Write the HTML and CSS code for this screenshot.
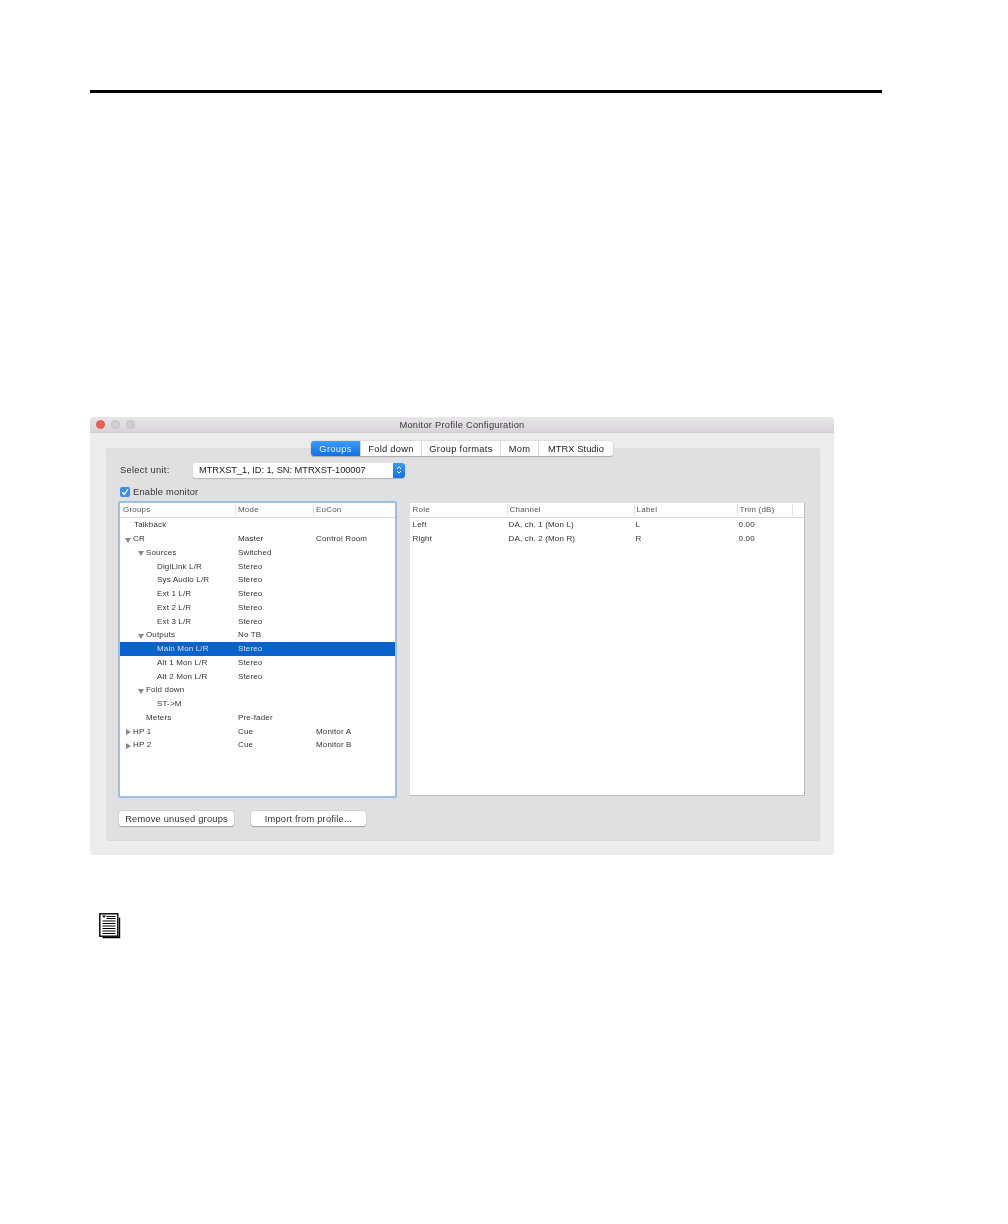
FILE: index.html
```html
<!DOCTYPE html>
<html lang="en">
<head>
<meta charset="utf-8">
<title>Monitor Profile Configuration</title>
<link rel="stylesheet" href="styles.css">
</head>
<body>
<div class="rule"></div>
<section class="window">
  <header class="titlebar">
    <div class="lights"><span class="light red"></span><span class="light"></span><span class="light"></span></div>
    <div class="title">Monitor Profile Configuration</div>
  </header>
  <div class="panel">
    <nav class="tabs">
      <span class="tab active t1">Groups</span><span class="tab t2">Fold down</span><span class="tab t3">Group formats</span><span class="tab t4">Mom</span><span class="tab t5">MTRX Studio</span>
    </nav>
    <div class="unit-row">
      <span class="unit-label">Select unit:</span>
      <div class="select">
        <span class="select-text">MTRXST_1, ID: 1, SN: MTRXST-100007</span>
        <span class="stepper"><svg width="6" height="10" viewBox="0 0 6 10"><path d="M1 4 3 1.8 5 4M1 6 3 8.2 5 6" fill="none" stroke="#fff" stroke-width="1"/></svg></span>
      </div>
    </div>
    <label class="enable">
      <span class="check"><svg width="10" height="10" viewBox="0 0 10 10"><path d="M2.2 5.2 4.2 7.4 7.9 2.4" fill="none" stroke="#fff" stroke-width="1.3"/></svg></span>
      Enable monitor
    </label>
    <div class="tables">
      <div class="table left">
        <div class="thead lcols"><span>Groups</span><span>Mode</span><span>EuCon</span></div>
        <div class="tbody">
          <div class="row lcols"><span class="i1">Talkback</span><span></span><span></span></div>
          <div class="row lcols"><span class="i0"><i class="down"></i>CR</span><span>Master</span><span>Control Room</span></div>
          <div class="row lcols"><span class="i2"><i class="down"></i>Sources</span><span>Switched</span><span></span></div>
          <div class="row lcols"><span class="i3">DigiLink L/R</span><span>Stereo</span><span></span></div>
          <div class="row lcols"><span class="i3">Sys Audio L/R</span><span>Stereo</span><span></span></div>
          <div class="row lcols"><span class="i3">Ext 1 L/R</span><span>Stereo</span><span></span></div>
          <div class="row lcols"><span class="i3">Ext 2 L/R</span><span>Stereo</span><span></span></div>
          <div class="row lcols"><span class="i3">Ext 3 L/R</span><span>Stereo</span><span></span></div>
          <div class="row lcols"><span class="i2"><i class="down"></i>Outputs</span><span>No TB</span><span></span></div>
          <div class="row lcols selected"><span class="i3">Main Mon L/R</span><span>Stereo</span><span></span></div>
          <div class="row lcols"><span class="i3">Alt 1 Mon L/R</span><span>Stereo</span><span></span></div>
          <div class="row lcols"><span class="i3">Alt 2 Mon L/R</span><span>Stereo</span><span></span></div>
          <div class="row lcols"><span class="i2"><i class="down"></i>Fold down</span><span></span><span></span></div>
          <div class="row lcols"><span class="i3">ST-&gt;M</span><span></span><span></span></div>
          <div class="row lcols"><span class="i2">Meters</span><span>Pre-fader</span><span></span></div>
          <div class="row lcols"><span class="i0"><i class="right"></i>HP 1</span><span>Cue</span><span>Monitor A</span></div>
          <div class="row lcols"><span class="i0"><i class="right"></i>HP 2</span><span>Cue</span><span>Monitor B</span></div>
        </div>
      </div>
      <div class="table rightt">
        <div class="thead rcols"><span>Role</span><span>Channel</span><span>Label</span><span>Trim (dB)</span><span></span></div>
        <div class="tbody">
          <div class="row rcols"><span>Left</span><span>DA, ch. 1 (Mon L)</span><span>L</span><span>0.00</span><span></span></div>
          <div class="row rcols"><span>Right</span><span>DA, ch. 2 (Mon R)</span><span>R</span><span>0.00</span><span></span></div>
        </div>
      </div>
    </div>
    <div class="actions">
      <button class="btn b1" type="button">Remove unused groups</button>
      <button class="btn b2" type="button">Import from profile...</button>
    </div>
  </div>
</section>
<div class="note">
  <svg width="22" height="26" viewBox="0 0 22 26">
    <path d="M3.5 24.5H20.5V4.5" fill="none" stroke="#000" stroke-width="1.4"/>
    <rect x="0.8" y="0.8" width="18" height="22.4" fill="#fff" stroke="#000" stroke-width="1.4"/>
    <path d="M3 2.5H7L5 5Z" fill="#000"/>
    <path d="M7.5 3.5H16.5M7.5 5.5H16.5M3.5 8H16.5M3.5 10.5H16.5M3.5 13H16.5M3.5 15.5H16.5M3.5 18H16.5M3.5 20.5H16.5" stroke="#000" stroke-width="1"/>
  </svg>
</div>
</body>
</html>
```

FILE: styles.css
```css
* { box-sizing: border-box; }
html, body { margin: 0; padding: 0; background: #fff; }
body {
  width: 1008px;
  height: 1224px;
  overflow: hidden;
  padding: 90px 126px 0 90px;
  font-family: "Liberation Sans", Arial, sans-serif;
  color: #222;
}
.rule { height: 3px; background: #000; }

.window {
  width: 744px;
  height: 438px;
  margin-top: 324px;
  background: #ececec;
  border-radius: 4px;
  display: flex;
  flex-direction: column;
  align-items: stretch;
  filter: blur(0.35px);
}
.titlebar {
  height: 16px;
  flex: none;
  position: relative;
  display: flex;
  align-items: center;
  justify-content: center;
  background: linear-gradient(#e8e6e8, #d6d4d6);
  border-radius: 4px 4px 0 0;
  border-bottom: 1px solid #d0d0d0;
}
.lights { position: absolute; left: 6px; top: 3px; display: flex; gap: 6px; }
.light { width: 9px; height: 9px; border-radius: 50%; background: #cfcdcf; border: 1px solid #c4c2c4; }
.light.red { background: #f0605a; border-color: #e0544e; }
.title { font-size: 9.3px; letter-spacing: 0.25px; color: #3c3c3c; }

.panel {
  margin: 15px 14px 14px 16px;
  flex: 1;
  background: #e0e0e0;
  border: 1px solid #dcdcdc;
  border-radius: 2px;
  padding: 0 14px 0 11px;
  position: relative;
  display: flex;
  flex-direction: column;
}
.tabs {
  position: absolute;
  top: -8px;
  left: 204px;
  display: flex;
  height: 15px;
  border-radius: 3px;
  background: #fff;
  box-shadow: 0 1px 1px #a9a9a9, 0 0 0 0.5px #cfcfcf;
}
.tab {
  display: flex;
  align-items: center;
  justify-content: center;
  font-size: 9.3px;
  letter-spacing: 0.3px;
  color: #222;
  border-left: 1px solid #d8d8d8;
}
.tab.active {
  background: linear-gradient(#3c9bfb, #0f72e8);
  color: #e3efff;
  border: 0;
  border-radius: 3px 0 0 3px;
}
.t1 { width: 49px; }
.t2 { width: 61px; }
.t3 { width: 79px; }
.t4 { width: 38px; }
.t5 { width: 75px; letter-spacing: 0.05px; }

.unit-row { display: flex; align-items: center; margin-top: 13px; height: 16px; }
.unit-label { width: 75px; padding-left: 2px; font-size: 9.3px; letter-spacing: 0.3px; color: #333; }
.select {
  width: 212px;
  height: 15px;
  background: #fff;
  border-radius: 3px;
  box-shadow: 0 1px 1px #b4b4b4;
  display: flex;
  justify-content: space-between;
  align-items: center;
}
.select-text { padding-left: 6px; font-size: 9.3px; letter-spacing: -0.05px; color: #222; }
.stepper {
  width: 12px;
  height: 15px;
  background: linear-gradient(#3c9bfb, #0f72e8);
  border-radius: 0 3px 3px 0;
  display: flex;
  align-items: center;
  justify-content: center;
}

.enable {
  display: flex;
  align-items: center;
  gap: 3px;
  height: 12px;
  margin-top: 8px;
  padding-left: 2px;
  font-size: 9.3px;
  letter-spacing: 0.2px;
  color: #333;
}
.check {
  width: 10px;
  height: 10px;
  border-radius: 2px;
  background: #3d8fe8;
  display: flex;
}

.tables { display: flex; align-items: flex-start; margin-top: 3px; }
.table { background: #fff; }
.left {
  width: 279px;
  height: 297px;
  border: 2px solid #9dbfe2;
  border-radius: 2px;
  box-shadow: 0 0 1px #b9cfe6;
}
.rightt {
  width: 396px;
  height: 293px;
  margin-left: 13px;
  margin-top: 2px;
  border-right: 1px solid #bdbdbd;
  border-bottom: 1px solid #bdbdbd;
}
.thead {
  height: 15px;
  display: grid;
  align-items: center;
  font-size: 8px;
  letter-spacing: 0.2px;
  color: #555;
  border-bottom: 1px solid #d9d9d9;
}
.thead span { height: 12px; line-height: 12px; border-left: 1px solid #e2e2e2; padding-left: 2px; }
.thead span:first-child { border-left: 0; padding-left: 3px; }
.lcols { grid-template-columns: 115px 78px 1fr; }
.rcols { grid-template-columns: 97px 127px 103px 55px 1fr; }
.row {
  height: 13.75px;
  display: grid;
  align-items: center;
  font-size: 8px;
  letter-spacing: 0.15px;
  color: #333;
  white-space: nowrap;
}
.lcols.row span:nth-child(n+2) { padding-left: 3px; }
.rcols.row span { padding-left: 2px; }
.rcols.row span:first-child { padding-left: 3px; }
.row.selected { background: #0a62cc; color: #cfe2fa; }
.i0 { padding-left: 13px; }
.i1 { padding-left: 14px; }
.i2 { padding-left: 26px; }
.i3 { padding-left: 37px; }
.row span:first-child { position: relative; }
.down, .right { position: absolute; width: 0; height: 0; }
.down {
  top: 3.5px;
  margin-left: -8.5px;
  border-left: 3px solid transparent;
  border-right: 3px solid transparent;
  border-top: 5px solid #888;
}
.right {
  top: 2.5px;
  margin-left: -7px;
  border-top: 3px solid transparent;
  border-bottom: 3px solid transparent;
  border-left: 5px solid #888;
}

.actions { display: flex; margin-top: 13px; padding-left: 1px; }
.btn {
  height: 15px;
  padding: 0;
  background: #fff;
  border: 0;
  border-radius: 3px;
  box-shadow: 0 0.5px 1px #9f9f9f, 0 0 0 0.5px #d2d2d2;
  font-family: inherit;
  font-size: 9.3px;
  letter-spacing: 0.2px;
  color: #333;
}
.b1 { width: 115px; }
.b2 { width: 115px; margin-left: 17px; }

.note { margin: 58px 0 0 9px; line-height: 0; }
```
